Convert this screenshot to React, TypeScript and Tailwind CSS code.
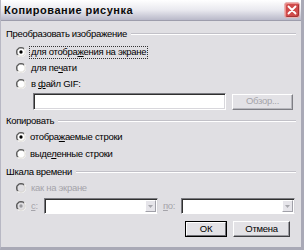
import React from "react";

function Radio({ checked, disabled }: { checked?: boolean; disabled?: boolean }) {
  return (
    <svg width="10" height="10" viewBox="0 0 12 12" className="shrink-0">
      <circle cx="6" cy="6" r="5.5" fill={disabled ? "#e0dfe3" : "#ffffff"} />
      <path d="M10.24 1.76 A6 6 0 0 0 1.76 10.24" stroke="#808080" strokeWidth="1" fill="none" />
      <path d="M9.54 2.46 A5 5 0 0 0 2.46 9.54" stroke="#303030" strokeWidth="1.2" fill="none" />
      <path d="M10.24 1.76 A6 6 0 0 1 1.76 10.24" stroke="#ffffff" strokeWidth="1" fill="none" />
      <path d="M9.54 2.46 A5 5 0 0 1 2.46 9.54" stroke="#d4d0c8" strokeWidth="1" fill="none" />
      {checked && <circle cx="6" cy="6" r="2" fill={disabled ? "#9a9a9e" : "#000000"} />}
    </svg>
  );
}

function GroupHeader({ label }: { label: string }) {
  return (
    <div className="flex items-center h-[13px] pl-[5px] pr-[5px]">
      <span className="leading-none">{label}</span>
      <div className="flex-1 ml-[4px] h-[2px] border-t border-t-[#c2c1c8] border-b border-b-white" />
    </div>
  );
}

function U({ children }: { children: React.ReactNode }) {
  return <span className="underline underline-offset-[1px]">{children}</span>;
}

function Arrow() {
  return (
    <div className="w-[11px] h-full shrink-0 bg-[#e6e5ea] border border-t-white border-l-white border-b-[#a0a0a8] border-r-[#a0a0a8] flex items-center justify-center">
      <svg width="5" height="3" viewBox="0 0 5 3">
        <path d="M0 0 L5 0 L2.5 3 Z" fill="#a8a8ae" />
      </svg>
    </div>
  );
}

export default function App() {
  return (
    <div className="w-[304px] h-[250px] flex flex-col bg-[#e0dfe3] font-['Liberation_Sans',Arial,sans-serif] text-[9.5px] tracking-[-0.3px] text-black border-l border-l-[#b8b8c4] border-r-[3px] border-r-[#a9a9b6] border-b-[3px] border-b-[#a9a9b6] overflow-hidden">
      {/* Title bar */}
      <div className="h-[21px] shrink-0 flex items-center bg-gradient-to-b from-[#ffffff] via-[#e9e9ef] to-[#b9b9c9] border-b border-b-[#9d9dac]">
        <span className="pl-[3px] font-bold text-[11px] tracking-[0.5px] text-[#0a0a0a]">Копирование рисунка</span>
        <div className="ml-auto mr-[1px] w-[16px] h-[16px] rounded-[3px] border border-[#e8b4b4] bg-[#cf4b4b] shadow-[inset_1px_1px_0_#ec8f8d,inset_-1px_-1px_0_#a83234] flex items-center justify-center">
          <svg width="10" height="10" viewBox="0 0 10 10">
            <path d="M1.5 1.5 L8.5 8.5 M8.5 1.5 L1.5 8.5" stroke="#ffffff" strokeWidth="1.8" strokeLinecap="round" />
          </svg>
        </div>
      </div>

      {/* Body */}
      <div className="flex flex-col pt-[6px]">
        <GroupHeader label="Преобразовать изображение" />
        <div className="mt-[4px] flex flex-col">
          <div className="h-[16px] flex items-center pl-[15px]">
            <Radio checked />
            <span className="ml-[3px] px-[1px] h-[13px] flex items-center border border-dotted border-[#333]">
              для отобра<U>ж</U>ения на экране
            </span>
          </div>
          <div className="h-[16px] flex items-center pl-[15px]">
            <Radio />
            <span className="ml-[5px]">для пе<U>ч</U>ати</span>
          </div>
          <div className="h-[16px] flex items-center pl-[15px]">
            <Radio />
            <span className="ml-[5px]">в <U>ф</U>айл GIF:</span>
          </div>
        </div>
        <div className="mt-[1px] h-[17px] flex items-center pl-[32px]">
          <div className="w-[193px] h-[17px] bg-white border border-t-[#7a7a80] border-l-[#7a7a80] border-b-white border-r-white shadow-[inset_1px_1px_0_#303030,inset_-1px_-1px_0_#d8d7dc]" />
          <div className="ml-[6px] w-[61px] h-[16px] flex items-center justify-center bg-[#e3e2e6] border border-t-white border-l-white border-b-[#7e7e84] border-r-[#7e7e84] shadow-[inset_-1px_-1px_0_#b8b8be] text-[#a5a4aa]">
            Обзор...
          </div>
        </div>

        <div className="mt-[4px]">
          <GroupHeader label="Копировать" />
        </div>
        <div className="mt-[2px] flex flex-col gap-[1px]">
          <div className="h-[16px] flex items-center pl-[15px]">
            <Radio checked />
            <span className="ml-[4px]">отобра<U>ж</U>аемые строки</span>
          </div>
          <div className="h-[16px] flex items-center pl-[15px]">
            <Radio />
            <span className="ml-[4px]">выде<U>л</U>енные строки</span>
          </div>
        </div>

        <div className="mt-[3px]">
          <GroupHeader label="Шкала времени" />
        </div>
        <div className="mt-[2px] h-[16px] flex items-center pl-[15px]">
          <Radio disabled />
          <span className="ml-[5px] text-[#a5a4aa]">как на экране</span>
        </div>
        <div className="mt-[2px] h-[16px] flex items-center pl-[15px]">
          <Radio checked disabled />
          <span className="ml-[5px] w-[13px] text-[#a5a4aa]"><U>с</U>:</span>
          <div className="w-[114px] h-[16px] flex bg-white border border-t-[#7a7a80] border-l-[#7a7a80] border-b-white border-r-[#d8d7dc] shadow-[inset_1px_1px_0_#303030] p-[1px] pl-[2px] justify-end">
            <Arrow />
          </div>
          <span className="ml-[5px] w-[18px] text-[#a5a4aa]"><U>п</U>о:</span>
          <div className="w-[114px] h-[16px] flex bg-white border border-t-[#7a7a80] border-l-[#7a7a80] border-b-white border-r-[#d8d7dc] shadow-[inset_1px_1px_0_#303030] p-[1px] pl-[2px] justify-end">
            <Arrow />
          </div>
        </div>

        <div className="mt-[7px] flex justify-end pr-[11px] gap-[6px]">
          <div className="w-[42px] h-[16px] border border-black">
            <div className="w-full h-full flex items-center justify-center bg-[#e3e2e6] border border-t-white border-l-white border-b-[#6e6e74] border-r-[#6e6e74]">
              ОК
            </div>
          </div>
          <div className="w-[57px] h-[16px] flex items-center justify-center bg-[#e3e2e6] border border-t-white border-l-white border-b-[#404044] border-r-[#404044] shadow-[inset_-1px_-1px_0_#9a9aa0]">
            Отмена
          </div>
        </div>
      </div>
    </div>
  );
}
